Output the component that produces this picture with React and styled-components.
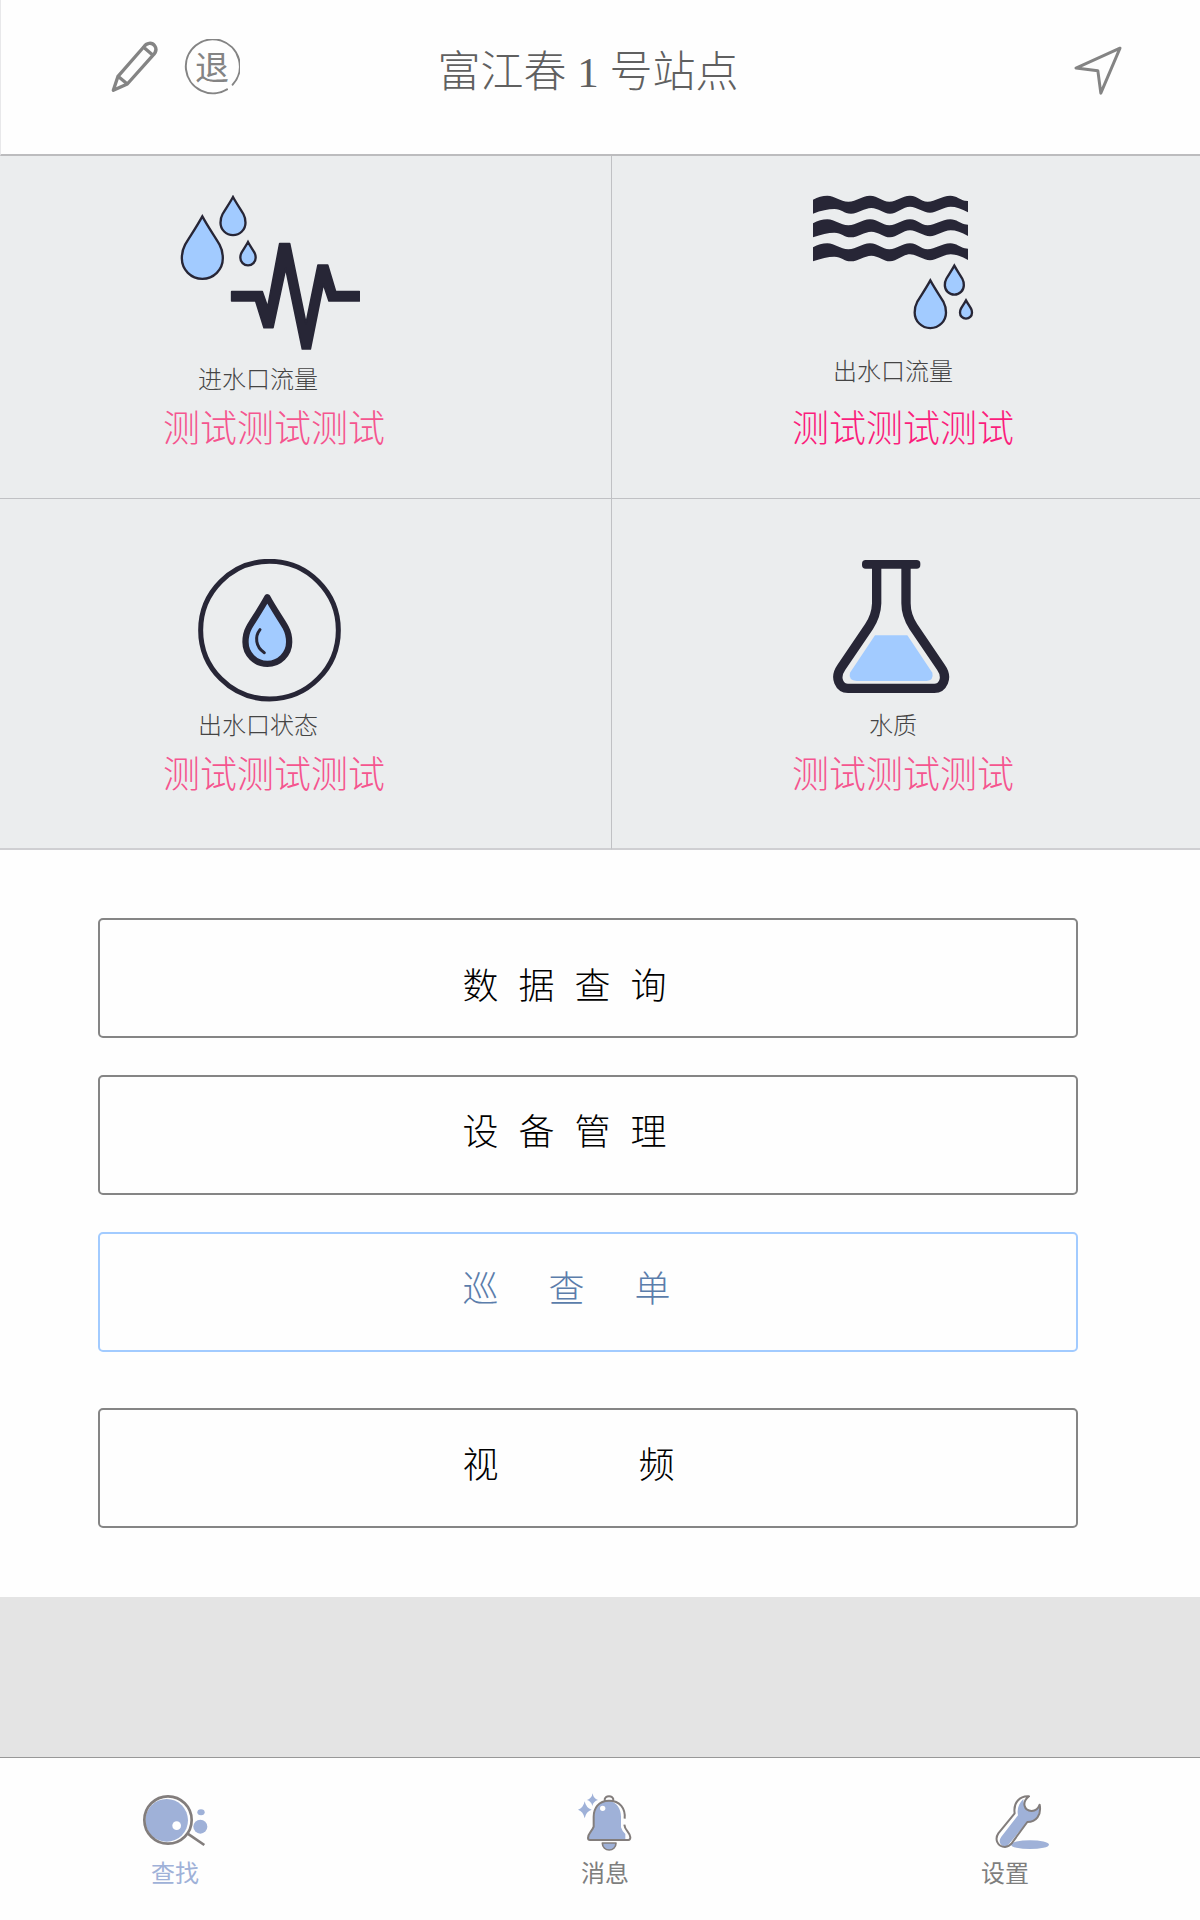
import React from "react";
import styled, { createGlobalStyle } from "styled-components";

const INK = "#272636";
const WATER = "#a2cbff";
const GREY = "#848484";
const NAV_BLUE = "#9fb1d8";
const NAV_LINE = "#827d7c";

const GlobalStyle = createGlobalStyle`
  *, *::before, *::after { box-sizing: border-box; }
  body {
    margin: 0;
    background: #fff;
    font-family: "Liberation Sans", "Noto Sans CJK SC", sans-serif;
  }
  button { font: inherit; color: inherit; background: none; border: 0; padding: 0; cursor: pointer; }
  svg { display: block; }
`;

const Page = styled.div`
  display: flex;
  flex-direction: column;
  min-height: 100vh;
  background: #fefefe;
`;

const Header = styled.header`
  display: grid;
  grid-template-columns: 1fr auto 1fr;
  align-items: center;
  height: 156px;
  padding: 0 78px 20px 53px;
  border-bottom: 2px solid #bcbcbe;
  border-left: 1px solid #e8e8ea;
`;

const HeaderTools = styled.div`
  display: flex;
  align-items: center;
  gap: 26px;
  padding-left: 57px;
`;

const Title = styled.h1`
  margin: 0;
  padding-top: 12px;
  font-family: "Liberation Serif", "Noto Sans CJK SC", serif;
  font-size: 43px;
  line-height: 56px;
  font-weight: 200;
  color: #606060;
  white-space: nowrap;
`;

const IconButton = styled.button`
  display: grid;
  place-items: center;
  justify-self: ${(p) => p.$end ? "end" : "auto"};
  padding-top: ${(p) => p.$end ? "6px" : "0"};
  > * { grid-area: 1 / 1; }
`;

const ExitMark = styled.span`
  font-size: 34px;
  line-height: 40px;
  padding-top: 2px;
  font-weight: 400;
  color: ${GREY};
`;

const Metrics = styled.section`
  display: grid;
  grid-template-columns: 51% 49%;
  background: #ebedee;
  color: #444;
`;

const Tile = styled.article`
  display: flex;
  flex-direction: column;
  align-items: center;
  padding-top: ${(p) => p.$row === 0 ? "39px" : "60px"};
  padding-right: ${(p) => p.$col === 0 ? "71px" : "26px"};
  padding-bottom: ${(p) => p.$row === 0 ? "44px" : "48px"};
  border-bottom: ${(p) => p.$row === 0 ? "1px solid #c0c1c4" : "2px solid #cfcfd2"};
  border-right: ${(p) => p.$col === 0 ? "1px solid #c0c1c4" : "0"};
`;

const TileLabel = styled.h2`
  margin: 8px 0 10px;
  padding-right: ${(p) => p.$col === 0 ? "24px" : "0"};
  font-size: 24px;
  line-height: 32px;
  font-weight: 200;
`;

const TileValue = styled.p`
  margin: auto 0 0;
  padding-left: ${(p) => p.$col === 0 ? "8px" : "20px"};
  font-size: 37px;
  line-height: 48px;
  font-weight: 200;
  color: ${(p) => p.$strong ? "#fb1d7c" : "#f5558f"};
`;

const Actions = styled.main`
  display: flex;
  flex-direction: column;
  gap: 56px;
  padding: 68px 122px 69px 98px;
`;

const ActionGroup = styled.div`
  display: flex;
  flex-direction: column;
  gap: 37px;
`;

const ActionButton = styled.button`
  && {
    display: flex;
    align-items: center;
    height: 120px;
    padding: ${(p) => p.$low ? "18px 0 0 37%" : "0 0 4px 37%"};
    border: 2px solid ${(p) => p.$active ? "#a2cbff" : "#858585"};
    border-radius: 5px;
    font-size: 36px;
    line-height: 48px;
    font-weight: 200;
    color: ${(p) => p.$active ? "#5b7dab" : "#000"};
    white-space: pre;
  }
`;

const Spacer = styled.div`
  flex: 1 0 160px;
  background: #e4e4e4;
`;

const Nav = styled.nav`
  display: grid;
  grid-template-columns: 350fr 510fr 290fr;
  height: 163px;
  padding: 34px 50px 0 0;
  border-top: 1px solid #989898;
`;

const NavLink = styled.a`
  display: flex;
  flex-direction: column;
  align-items: center;
  gap: 6px;
  font-size: 24px;
  line-height: 32px;
  font-weight: 400;
  text-decoration: none;
  color: ${(p) => p.$active ? NAV_BLUE : "#7e7e7e"};
`;

const Drop = ({ x, y, r, line = 7 }) => (
  <path
    d="M0 0C.3 .55 .62 1 .84 1.38C.96 1.6 1 1.8 1 2.05A1 1 0 0 1 -1 2.05C-1 1.8 -.96 1.6 -.84 1.38C-.62 1 -.3 .55 0 0Z"
    transform={`translate(${x} ${y}) scale(${r})`}
    fill={WATER}
    stroke={INK}
    strokeWidth={line / r}
    strokeLinejoin={line > 10 ? "round" : "miter"}
  />
);

const InflowIcon = () => (
  <svg width="180" height="161" viewBox="120 75 540 483" aria-hidden="true">
    <Drop x={187} y={139} r={61.5} />
    <Drop x={279} y={81} r={37.5} />
    <Drop x={324} y={216} r={23} />
    <path
      d="M275 365H367L383 412L419 221H449L498 460L534 285H563L587 365H658V393H567L550 342L511 537H487L437 295L399 473H372L347 393H275Z"
      fill={INK} stroke={INK} strokeWidth="5" strokeLinejoin="round"
    />
  </svg>
);

const WAVE =
  "M219 89Q240 77 262 77C285 77 300 95 325 95S365 77 390 77S425 95 448 95S485 77 510 77S540 95 563 95S605 77 631 77C650 77 660 89 674 92L684 93V127Q655 110 632 110C610 110 590 128 570 128S530 110 510 110S470 131 450 131S415 114 394 114S355 131 333 131S305 117 283 117Q255 117 219 131Z";

const OutflowIcon = () => (
  <svg width="162" height="153" viewBox="216 75 486 459" aria-hidden="true">
    {[0, 71, 143].map((y) => <path key={y} d={WAVE} transform={`translate(0 ${y})`} fill={INK} />)}
    <Drop x={571} y={331} r={47} />
    <Drop x={643} y={287} r={28.5} />
    <Drop x={678} y={391} r={18} />
  </svg>
);

const StatusIcon = () => (
  <svg width="144" height="143" viewBox="174 86 432 429" aria-hidden="true">
    <circle cx="388.5" cy="299.5" r="206.5" fill="none" stroke={INK} strokeWidth="15" />
    <Drop x={382} y={201} r={65.5} line={19} />
    <path d="M360 298C344 318 346 350 373 367" fill="none" stroke={INK} strokeWidth="9" strokeLinecap="round" />
  </svg>
);

const FlaskIcon = () => (
  <svg width="120" height="143" viewBox="279 87 360 429" aria-hidden="true">
    <rect x="366" y="90" width="175" height="26" rx="11" fill={INK} />
    <path
      d="M410 108V220C409 250 400 270 387 290L304 412C281 445 300 475 324 475H583C607 475 626 445 603 412L520 290C505 267 498 245 498 220V108"
      fill="none" stroke={INK} strokeWidth="28"
    />
    <path d="M405 316H502L577 428Q582 450 560 453H350Q324 450 330 428Z" fill={WATER} />
  </svg>
);

const PencilIcon = () => (
  <svg width="47" height="52" viewBox="333 123 141 156" aria-hidden="true">
    <path
      d="M354 229L431 141C439 128 456 126 464 137C472 148 466 159 458 167L382 252L340 271L354 229L382 252M430 141L458 165"
      fill="none" stroke={GREY} strokeWidth="10" strokeLinejoin="round"
    />
  </svg>
);

const RingIcon = () => (
  <svg width="56" height="56" viewBox="555 117 168 168" aria-hidden="true">
    <path d="M684 268A81 81 0 1 1 701 254" fill="none" stroke={GREY} strokeWidth="6" strokeLinecap="round" />
  </svg>
);

const ArrowIcon = () => (
  <svg width="48" height="49" viewBox="222 138 145 147" aria-hidden="true">
    <path d="M361 144L228 204L294 212L303 280Z" fill="none" stroke={GREY} strokeWidth="9" strokeLinejoin="round" />
  </svg>
);

const SearchIcon = () => (
  <svg width="90" height="60" viewBox="90 156 270 180" aria-hidden="true">
    <circle cx="200" cy="241" r="64" fill={NAV_BLUE} />
    <circle cx="204" cy="240" r="71" fill="none" stroke={NAV_LINE} strokeWidth="8" />
    <circle cx="230" cy="257" r="13" fill="#fff" />
    <ellipse cx="303" cy="217" rx="11" ry="9" fill={NAV_BLUE} />
    <circle cx="301" cy="260" r="21" fill={NAV_BLUE} />
    <path d="M263 281L313 315" stroke={NAV_LINE} strokeWidth="8" />
  </svg>
);

const BellIcon = () => (
  <svg width="90" height="60" viewBox="60 156 270 180" aria-hidden="true">
    <path d="M161 230C161 202 178 182 207 182C230 186 243 205 243 230V262Q246 273 256 282V300H147Q144 285 161 264Z" fill={NAV_BLUE} />
    <path
      d="M254 236C257 205 240 182 207 182C175 182 161 205 161 230V260C157 273 144 280 144 294Q144 300 150 300H265Q271 300 271 292C271 278 254 272 253 254M194 182C192 164 222 164 220 182"
      fill="none" stroke={NAV_LINE} strokeWidth="6"
    />
    <path d="M187 309H228C228 337 187 337 187 309Z" fill={NAV_BLUE} stroke={NAV_LINE} strokeWidth="5" strokeLinejoin="round" />
    <circle cx="188" cy="205" r="8" fill="#fff" />
    <path d="M158 160Q160 176 174 180Q160 184 157 198Q154 184 141 180Q155 176 158 160ZM134 184Q138 204 155 209Q138 214 134 235Q130 214 114 209Q130 204 134 184Z" fill={NAV_BLUE} />
  </svg>
);

const WrenchIcon = () => (
  <svg width="90" height="60" viewBox="60 156 270 180" aria-hidden="true">
    <ellipse cx="270" cy="314" rx="57" ry="13" fill={NAV_BLUE} />
    <path d="M250 177C237 190 230 205 234 226L184 290C172 306 184 322 200 320L262 246C284 246 300 230 299 198C285 222 250 216 250 177Z" fill={NAV_BLUE} />
    <path
      d="M267 169C240 167 219 187 224 220L175 280C163 298 173 321 195 321C205 320 210 316 215 310L262 246C288 246 305 226 299 194C294 208 285 213 275 213C252 212 244 187 267 169Z"
      fill="none" stroke={NAV_LINE} strokeWidth="6" strokeLinejoin="round"
    />
  </svg>
);

const tiles = [
  { label: "进水口流量", value: "测试测试测试", Icon: InflowIcon },
  { label: "出水口流量", value: "测试测试测试", Icon: OutflowIcon, strong: true },
  { label: "出水口状态", value: "测试测试测试", Icon: StatusIcon },
  { label: "水质", value: "测试测试测试", Icon: FlaskIcon },
];

const spaced = (text, count) => text.split("").join(" ".repeat(count));

const navItems = [
  { label: "查找", Icon: SearchIcon, active: true },
  { label: "消息", Icon: BellIcon },
  { label: "设置", Icon: WrenchIcon },
];

export default function App() {
  return (
    <Page lang="zh-CN">
      <GlobalStyle />
      <Header>
        <HeaderTools>
          <IconButton type="button" aria-label="编辑"><PencilIcon /></IconButton>
          <IconButton type="button">
            <RingIcon />
            <ExitMark>退</ExitMark>
          </IconButton>
        </HeaderTools>
        <Title>富江春 1 号站点</Title>
        <IconButton type="button" aria-label="导航" $end><ArrowIcon /></IconButton>
      </Header>

      <Metrics>
        {tiles.map(({ label, value, Icon, strong }, i) => (
          <Tile key={label} $row={i >> 1} $col={i % 2}>
            <Icon />
            <TileLabel $col={i % 2}>{label}</TileLabel>
            <TileValue $col={i % 2} $strong={strong}>{value}</TileValue>
          </Tile>
        ))}
      </Metrics>

      <Actions>
        <ActionGroup>
          <ActionButton type="button" $low>{spaced("数据查询", 2)}</ActionButton>
          <ActionButton type="button">{spaced("设备管理", 2)}</ActionButton>
          <ActionButton type="button" $active>{spaced("巡查单", 5)}</ActionButton>
        </ActionGroup>
        <ActionGroup>
          <ActionButton type="button">{spaced("视频", 14)}</ActionButton>
        </ActionGroup>
      </Actions>

      <Spacer />

      <Nav>
        {navItems.map(({ label, Icon, active }) => (
          <NavLink key={label} href="#" $active={active} aria-current={active ? "page" : undefined}>
            <Icon />
            {label}
          </NavLink>
        ))}
      </Nav>
    </Page>
  );
}
